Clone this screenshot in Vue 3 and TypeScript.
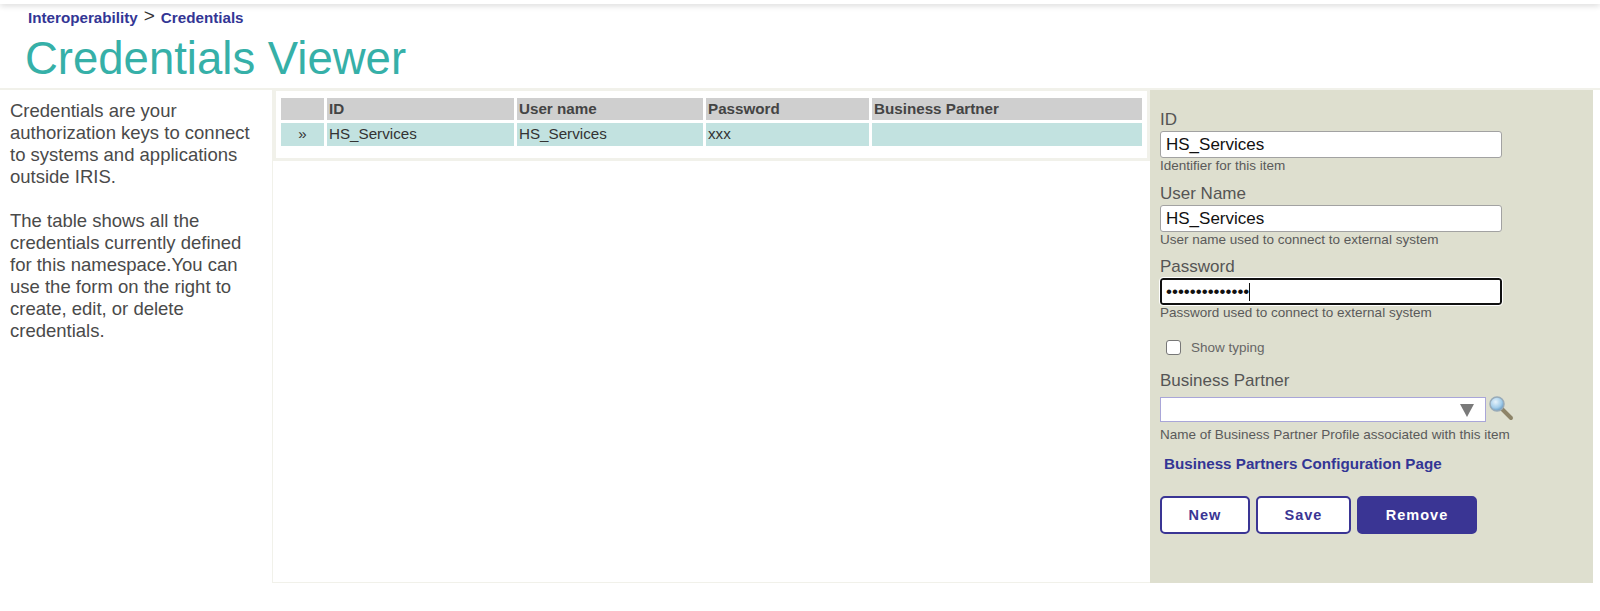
<script setup lang="ts">
const headers = ['', 'ID', 'User name', 'Password', 'Business Partner']
const row = ['»', 'HS_Services', 'HS_Services', 'xxx', '']
</script>

<template>
  <div class="page">
    <div class="topbar"></div>
    <div class="crumbs">
      <a class="crumb">Interoperability</a>
      <span class="sep">&gt;</span>
      <a class="crumb">Credentials</a>
    </div>
    <h1 class="title">Credentials Viewer</h1>
    <div class="main">
      <aside class="desc">
        <p>Credentials are your authorization keys to connect to systems and applications outside IRIS.</p>
        <p>The table shows all the credentials currently defined for this namespace.You can use the form on the right to create, edit, or delete credentials.</p>
      </aside>
      <section class="center">
        <div class="tablebox">
          <div class="grid">
            <div v-for="(h, i) in headers" :key="'h' + i" class="cell head">{{ h }}</div>
            <div v-for="(c, i) in row" :key="'c' + i" class="cell body" :class="{ mark: i === 0 }">{{ c }}</div>
          </div>
        </div>
      </section>
      <section class="form">
        <label class="lbl first">ID</label>
        <div class="input">HS_Services</div>
        <div class="hint">Identifier for this item</div>
        <label class="lbl">User Name</label>
        <div class="input">HS_Services</div>
        <div class="hint">User name used to connect to external system</div>
        <label class="lbl pw">Password</label>
        <div class="input focus"><span class="dots">••••••••••••••</span><span class="caret"></span></div>
        <div class="hint">Password used to connect to external system</div>
        <div class="show"><span class="check"></span><span>Show typing</span></div>
        <label class="lbl bp">Business Partner</label>
        <div class="selectrow">
          <div class="select"><span class="arrow"></span></div>
          <svg class="glass" width="26" height="26" viewBox="0 0 26 26">
            <defs>
              <radialGradient id="lens" cx="40%" cy="35%" r="70%">
                <stop offset="0" stop-color="#e6f3fb" />
                <stop offset="0.6" stop-color="#a3cdea" />
                <stop offset="1" stop-color="#5c92bd" />
              </radialGradient>
            </defs>
            <path d="M14 14 L23 23" stroke="#8d8468" stroke-width="4" stroke-linecap="round" />
            <circle cx="9" cy="9" r="7" fill="url(#lens)" stroke="#98abb9" stroke-width="1.5" />
          </svg>
        </div>
        <div class="hint below">Name of Business Partner Profile associated with this item</div>
        <a class="cfg">Business Partners Configuration Page</a>
        <div class="buttons">
          <button class="btn new">New</button>
          <button class="btn save">Save</button>
          <button class="btn remove">Remove</button>
        </div>
      </section>
    </div>
  </div>
</template>

<style>
body { background: #fff; }
</style>

<style scoped>
.page {
  width: 1600px;
  height: 611px;
  overflow: hidden;
  background: #fff;
  font-family: "Liberation Sans", Arial, sans-serif;
  color: #4a4a4a;
}
.topbar {
  height: 4px;
  background: #fff;
  box-shadow: 0 1px 6px rgba(0, 0, 0, 0.22);
}
.crumbs {
  height: 22px;
  padding: 4px 0 0 28px;
  font-size: 15.2px;
  line-height: 17px;
  box-sizing: border-box;
  white-space: nowrap;
}
.crumb { color: #333695; font-weight: 700; }
.sep { color: #333; font-size: 19px; margin: 0 6px 0 6px; position: relative; top: -1px; }
.title {
  margin: 0;
  padding-left: 25px;
  height: 62px;
  font-size: 45.5px;
  line-height: 65px;
  font-weight: 400;
  color: #36b0a8;
  white-space: nowrap;
}
.main {
  display: flex;
  height: 493px;
  border-top: 2px solid #f1f1ea;
}
.desc {
  width: 273px;
  flex: none;
  box-sizing: border-box;
  padding: 10px 18px 0 10px;
  font-size: 18.5px;
  line-height: 22px;
  border-right: 1px solid #f1f1ea;
}
.desc p { margin: 0 0 22px; }
.center {
  width: 877px;
  flex: none;
  box-sizing: border-box;
  border-bottom: 1px solid #f1f1ea;
}
.tablebox {
  height: 71px;
  box-sizing: border-box;
  padding: 7px 5px 0 5px;
  border-bottom: 3px solid #f1f1ea;
  border-right: 3px solid #f1f1ea;
  border-left: 3px solid #f1f1ea;
  border-top: 1px solid #f1f1ea;
}
.grid {
  display: grid;
  grid-template-columns: 43px 187px 186px 163px 1fr;
  grid-template-rows: 22px 23px;
  gap: 3px;
}
.cell {
  padding-left: 2px;
  font-size: 15.2px;
  line-height: 22px;
  color: #333;
  white-space: nowrap;
}
.head { background: #cfcfcf; font-weight: 700; color: #444; }
.body { background: #c2e2e0; }
.mark { text-align: center; padding-left: 0; }
.form {
  width: 443px;
  flex: none;
  box-sizing: border-box;
  background: #dedfcf;
  padding: 0 0 0 10px;
}
.lbl {
  display: block;
  font-size: 17px;
  line-height: 20px;
  margin-top: 10px;
  color: #555;
}
.lbl.first { margin-top: 20px; }
.lbl.pw { margin-top: 9px; }
.lbl.bp { margin-top: 16px; }
.input {
  box-sizing: border-box;
  width: 342px;
  height: 27px;
  margin-top: 1px;
  background: #fff;
  border: 1px solid #a2a2a2;
  border-radius: 3px;
  padding-left: 5px;
  font-size: 17px;
  line-height: 25px;
  color: #111;
  white-space: nowrap;
  display: flex;
  align-items: center;
}
.input.focus {
  border: 2px solid #111;
  outline: 1px solid #fff;
  padding-left: 4px;
}
.dots { font-size: 17px; color: #111; }
.caret { width: 1px; height: 18px; background: #111; }
.hint {
  font-size: 13.5px;
  line-height: 16px;
  color: #5a5a5a;
  white-space: nowrap;
}
.hint.below { margin-top: 5px; }
.show {
  display: flex;
  align-items: center;
  height: 16px;
  margin-top: 18px;
  padding-left: 6px;
  font-size: 13.5px;
  color: #666;
}
.check {
  box-sizing: border-box;
  width: 15px;
  height: 15px;
  background: #fff;
  border: 1px solid #777;
  border-radius: 3px;
  margin-right: 10px;
}
.selectrow { display: flex; align-items: flex-start; height: 25px; margin-top: 6px; }
.select {
  box-sizing: border-box;
  width: 326px;
  height: 25px;
  background: #fff;
  border: 1px solid #a9a6d8;
  position: relative;
}
.arrow {
  position: absolute;
  right: 11px;
  top: 6px;
  width: 0;
  height: 0;
  border-left: 7px solid transparent;
  border-right: 7px solid transparent;
  border-top: 13px solid #7a7a7a;
}
.glass { margin: -2px 0 0 2px; flex: none; }
.cfg {
  display: block;
  margin: 12px 0 0 4px;
  font-size: 15.2px;
  line-height: 18px;
  font-weight: 700;
  color: #333695;
  white-space: nowrap;
}
.buttons { display: flex; gap: 6px; margin-top: 23px; }
.btn {
  box-sizing: border-box;
  height: 38px;
  border: 2px solid #3a3594;
  border-radius: 5px;
  background: #fff;
  color: #3a3594;
  font-family: inherit;
  font-size: 14.5px;
  font-weight: 700;
  letter-spacing: 1px;
  padding: 0;
}
.new { width: 90px; }
.save { width: 95px; }
.remove { width: 120px; background: #3a3594; color: #fff; }
</style>
